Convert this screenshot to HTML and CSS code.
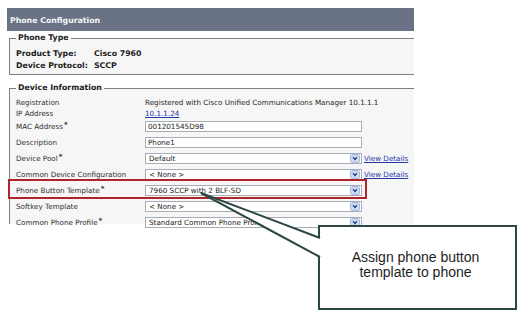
FILE: index.html
```html
<!DOCTYPE html>
<html>
<head>
<meta charset="utf-8">
<title>Phone Configuration</title>
<link rel="stylesheet" href="styles.css">
</head>
<body>
<div class="page">
  <div class="titlebar">Phone Configuration</div>

  <fieldset class="box phone-type">
    <legend>Phone Type</legend>
    <div class="kv"><span class="k">Product Type:</span><span class="v">Cisco 7960</span></div>
    <div class="kv"><span class="k">Device Protocol:</span><span class="v">SCCP</span></div>
  </fieldset>

  <fieldset class="box device-info">
    <legend>Device Information</legend>
    <div class="row text"><span class="label">Registration</span><span class="value wide">Registered with Cisco Unified Communications Manager 10.1.1.1</span></div>
    <div class="row text"><span class="label">IP Address</span><a class="value link">10.1.1.24</a></div>
    <div class="row"><span class="label">MAC Address<sup>*</sup></span><span class="field">001201545D98</span></div>
    <div class="row"><span class="label">Description</span><span class="field">Phone1</span></div>
    <div class="row"><span class="label">Device Pool<sup>*</sup></span><span class="field select">Default<svg class="arrow" width="10" height="9" viewBox="0 0 10 9"><rect x="0.5" y="0.5" width="9" height="8" rx="1" fill="#cddaf2" stroke="#aabde0"/><path d="M3 3.3 L5 5.5 L7 3.3" fill="none" stroke="#233f8e" stroke-width="1.3"/></svg></span><a class="details">View Details</a></div>
    <div class="row"><span class="label">Common Device Configuration</span><span class="field select">&lt; None &gt;<svg class="arrow" width="10" height="9" viewBox="0 0 10 9"><rect x="0.5" y="0.5" width="9" height="8" rx="1" fill="#cddaf2" stroke="#aabde0"/><path d="M3 3.3 L5 5.5 L7 3.3" fill="none" stroke="#233f8e" stroke-width="1.3"/></svg></span><a class="details">View Details</a></div>
    <div class="row highlight"><span class="label">Phone Button Template<sup>*</sup></span><span class="field select">7960 SCCP with 2 BLF-SD<svg class="arrow" width="10" height="9" viewBox="0 0 10 9"><rect x="0.5" y="0.5" width="9" height="8" rx="1" fill="#cddaf2" stroke="#aabde0"/><path d="M3 3.3 L5 5.5 L7 3.3" fill="none" stroke="#233f8e" stroke-width="1.3"/></svg></span></div>
    <div class="row"><span class="label">Softkey Template</span><span class="field select">&lt; None &gt;<svg class="arrow" width="10" height="9" viewBox="0 0 10 9"><rect x="0.5" y="0.5" width="9" height="8" rx="1" fill="#cddaf2" stroke="#aabde0"/><path d="M3 3.3 L5 5.5 L7 3.3" fill="none" stroke="#233f8e" stroke-width="1.3"/></svg></span></div>
    <div class="row"><span class="label">Common Phone Profile<sup>*</sup></span><span class="field select">Standard Common Phone Profile<svg class="arrow" width="10" height="9" viewBox="0 0 10 9"><rect x="0.5" y="0.5" width="9" height="8" rx="1" fill="#cddaf2" stroke="#aabde0"/><path d="M3 3.3 L5 5.5 L7 3.3" fill="none" stroke="#233f8e" stroke-width="1.3"/></svg></span></div>
  </fieldset>
</div>

<div class="callout"><p>Assign phone button<br>template to phone</p></div>
<svg class="pointer" width="527" height="312" viewBox="0 0 527 312">
  <polygon points="201,193 321,238 321,257" fill="#ffffff"/>
  <line x1="201" y1="193" x2="320" y2="238" stroke="#2d4744" stroke-width="2"/>
  <line x1="201" y1="193" x2="320" y2="257" stroke="#2d4744" stroke-width="2"/>
</svg>
</body>
</html>
```

FILE: styles.css
```css
html, body {
  margin: 0;
  padding: 0;
  background: #ffffff;
}
body {
  position: relative;
  width: 527px;
  height: 312px;
  overflow: hidden;
  font-family: "DejaVu Sans", Verdana, sans-serif;
  font-size: 7.2px;
  color: #262626;
}
.page {
  padding: 8px 0 0 7px;
  width: 407px;
}
.titlebar {
  height: 23px;
  line-height: 26px;
  background: #6a7386;
  color: #f4f5f8;
  font-weight: bold;
  font-size: 7.8px;
  padding-left: 3px;
}
.box {
  margin: 0 0 0 2px;
  padding: 0;
  border: 1px solid #7f7f7f;
  border-right: none;
  background: #f6f6f6;
  min-width: 0;
}
.box legend {
  margin-left: 0;
  padding: 0 2px;
  font-weight: bold;
  font-size: 7.8px;
  line-height: 10px;
  color: #222;
}
.phone-type {
  margin-top: 2px;
  padding: 4px 0 3px 6px;
}
.kv {
  display: grid;
  grid-template-columns: 78px auto;
  height: 12px;
  line-height: 13px;
  font-weight: bold;
  font-size: 7.8px;
  color: #1c1c1c;
}
.device-info {
  margin-top: 8px;
  padding: 3px 0 0 6px;
  border-bottom: none;
  height: 137px;
  box-sizing: content-box;
}
.row {
  display: grid;
  grid-template-columns: 127px 217px auto;
  column-gap: 2px;
  align-items: center;
  height: 16px;
}
.row.text {
  height: 11px;
  line-height: 13px;
}
.label {
  white-space: nowrap;
  color: #303030;
}
.label sup {
  font-size: 7px;
  font-weight: bold;
  line-height: 0;
  vertical-align: 2px;
  margin-left: 1px;
}
.value.wide {
  grid-column: 2 / 4;
  white-space: nowrap;
  color: #262626;
}
.link, .details {
  color: #2436a8;
  text-decoration: underline;
  cursor: pointer;
}
.field {
  display: flex;
  align-items: center;
  box-sizing: border-box;
  height: 11px;
  border: 1px solid #a7adb6;
  background: #ffffff;
  padding-left: 2px;
  color: #222;
  white-space: nowrap;
  overflow: hidden;
}
.field.select {
  padding-left: 3px;
}
.arrow {
  margin-left: auto;
  margin-right: 1px;
  flex: none;
}
.details {
  white-space: nowrap;
}
.highlight {
  position: relative;
}
.highlight::after {
  content: "";
  position: absolute;
  left: -8px;
  top: -3px;
  width: 359px;
  height: 20px;
  box-sizing: border-box;
  border: 2px solid #b0252c;
}
.callout {
  position: absolute;
  left: 318px;
  top: 225px;
  width: 199px;
  height: 85px;
  box-sizing: border-box;
  border: 2px solid #2d4744;
  background: #ffffff;
  display: flex;
  align-items: center;
  justify-content: center;
  padding: 0 4px 5px 0;
}
.callout p {
  margin: 0;
  text-align: center;
  font-family: "Liberation Sans", Arial, sans-serif;
  font-size: 14px;
  line-height: 15px;
  color: #1e1e1e;
}
.pointer {
  position: absolute;
  left: 0;
  top: 0;
  pointer-events: none;
}
```
